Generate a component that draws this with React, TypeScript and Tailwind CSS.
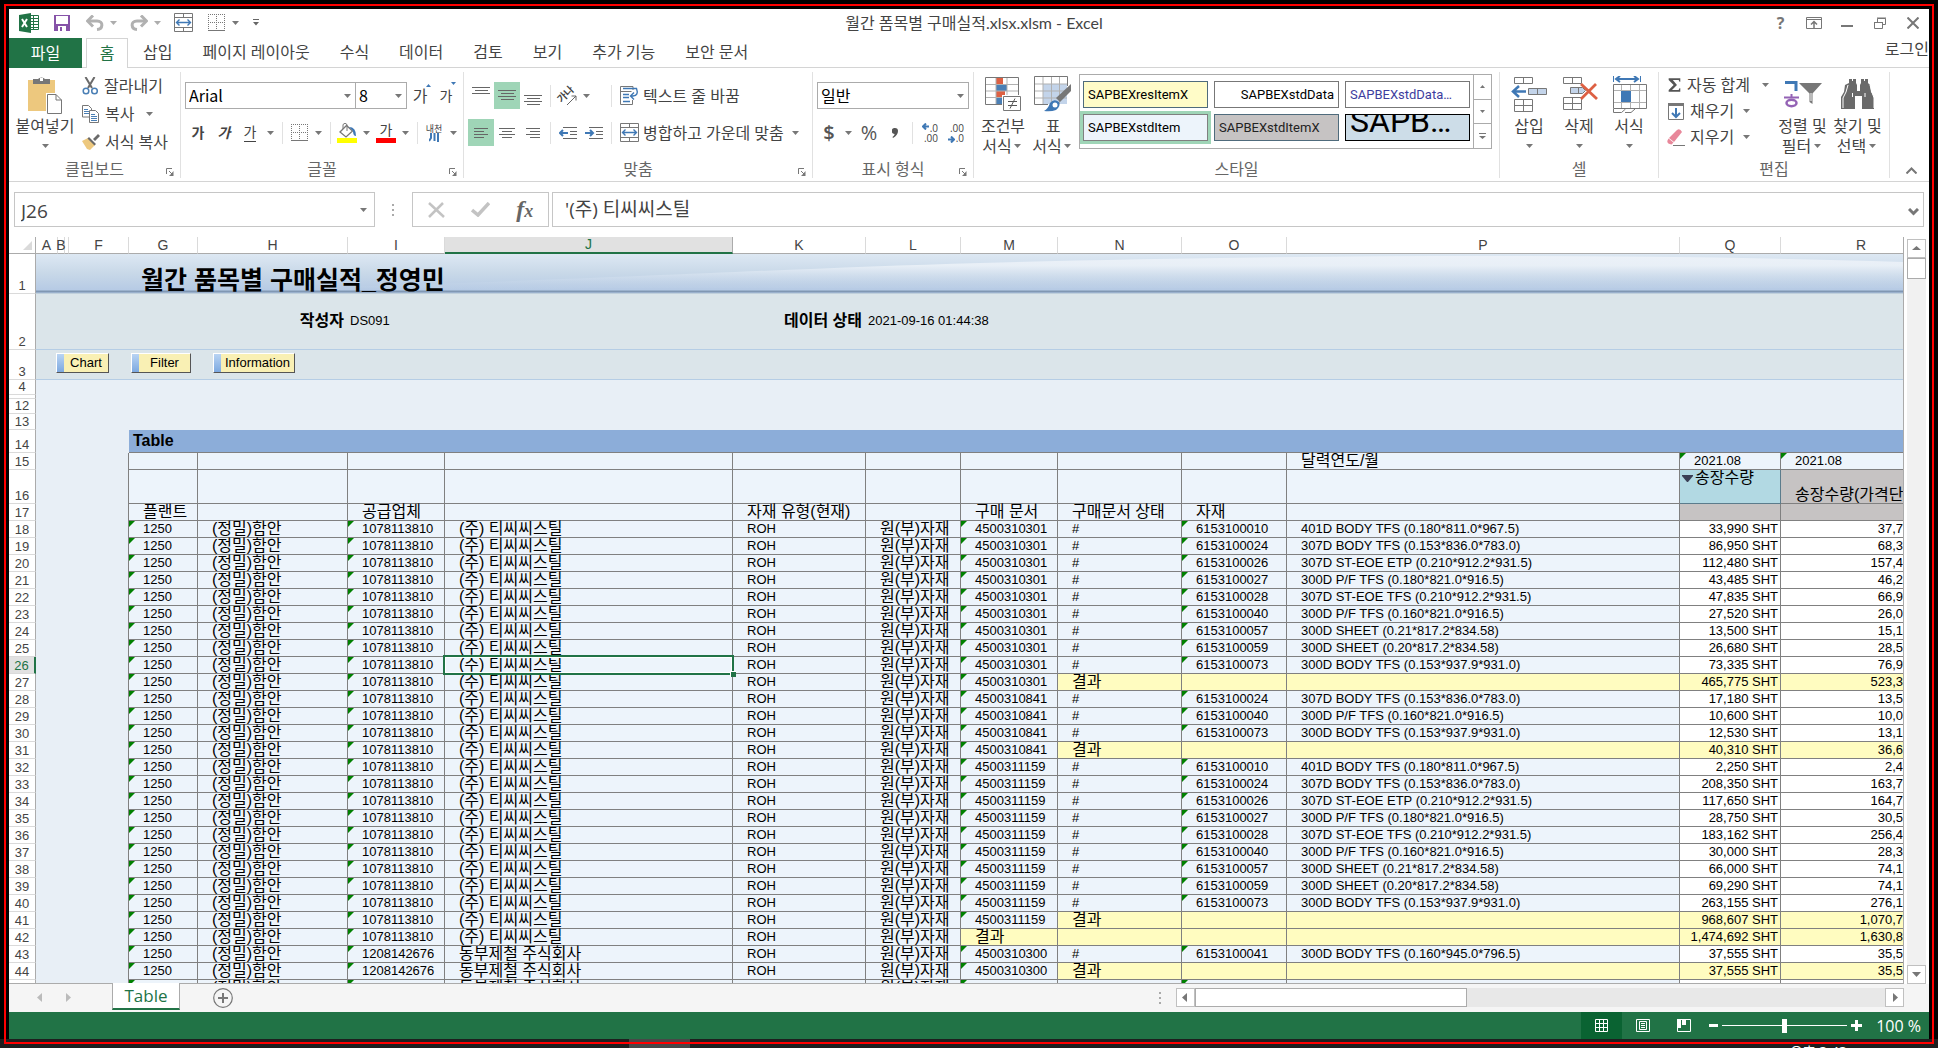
import type { ReactNode } from 'react';

/* ---------- small building blocks ---------- */

function Arrow({ className = 'w-[15px]' }: { className?: string }) {
  return (
    <span className={`flex shrink-0 items-center justify-center ${className}`}>
      <svg width="7" height="4" viewBox="0 0 7 4" aria-hidden="true">
        <path d="M0 0h7L3.5 4z" fill="#777" />
      </svg>
    </span>
  );
}

function Sep() {
  return <span className="mx-1 h-[22px] w-px shrink-0 bg-[#e1e1e1]" />;
}

function Tool({ label, on, wide, children }: { label: string; on?: boolean; wide?: boolean; children: ReactNode }) {
  return (
    <button
      type="button"
      aria-label={label}
      className={`flex h-[27px] shrink-0 items-center justify-center ${wide ? 'w-[26px]' : 'w-6'} ${on ? 'bg-[#9fd5b7]' : ''}`}
    >
      {children}
    </button>
  );
}

function Group({ label, width, launcher, children }: { label: string; width: string; launcher?: boolean; children: ReactNode }) {
  return (
    <section aria-label={label} className={`relative flex shrink-0 flex-col border-r border-[#e1e1e1] ${width}`}>
      <div className="flex-1 pl-1">{children}</div>
      <div className="h-[18px] text-center leading-[18px] text-[#666]">{label}</div>
      {launcher && (
        <button type="button" aria-label={`${label} 설정`} className="absolute right-1.5 bottom-0.5">
          <svg width="8" height="8" viewBox="0 0 8 8" fill="none" stroke="#777">
            <path d="M.5 6V.5H6M3 3l3 3" />
            <path d="M7.5 3v5H3l2-2z" fill="#777" stroke="none" />
          </svg>
        </button>
      )}
    </section>
  );
}

function Combo({ label, value, className }: { label: string; value: string; className: string }) {
  return (
    <span className={`relative h-[27px] shrink-0 border border-[#ababab] bg-white [font-family:'Noto_Sans_CJK_KR',sans-serif] ${className}`}>
      <select aria-label={label} className="size-full appearance-none pb-0.5 pl-[3px] leading-6 text-black outline-none">
        <option>{value}</option>
      </select>
      <Arrow className="pointer-events-none absolute top-0 right-0 h-full w-[15px]" />
    </span>
  );
}

function BigButton({ lines, icon, width = 'w-[50px]', arrow = 'below' }: { lines: string[]; icon: ReactNode; width?: string; arrow?: 'below' | 'inline' }) {
  return (
    <button type="button" className={`flex shrink-0 flex-col items-center pt-1 leading-5 whitespace-nowrap ${width}`}>
      <span className="flex h-10 items-start justify-center">{icon}</span>
      <span>{lines[0]}</span>
      {arrow === 'inline' ? (
        <span className="flex items-center">
          {lines[1]}
          <Arrow className="w-3" />
        </span>
      ) : (
        <Arrow className="h-5" />
      )}
    </button>
  );
}

/* ---------- icons ---------- */

const Lines = ({ rows, size = 18 }: { rows: [number, number, number][]; size?: number }) => (
  <svg width={size} height="20" viewBox={`0 0 ${size} 20`} stroke="#666" aria-hidden="true">
    {rows.map(([x1, x2, y]) => (
      <path key={y} d={`M${x1} ${y + 0.5}H${x2}`} />
    ))}
  </svg>
);

const ExcelLogo = () => (
  <svg width="20" height="20" viewBox="0 0 20 20" aria-label="Excel">
    <path d="M11 2.5h8.5v14H11z" fill="#fff" stroke="#217346" />
    <path d="M11 5.5h8M11 8.5h8M11 11.5h8M11 14.5h8M14.5 3v14" stroke="#217346" />
    <path d="M0 2l12-2v20L0 18z" fill="#217346" />
    <path d="M3 6l5 8M8 6l-5 8" stroke="#fff" strokeWidth="2" />
  </svg>
);
const SaveIcon = () => (
  <svg width="16" height="16" viewBox="0 0 16 16" aria-hidden="true">
    <path d="M0 0h16v16H0z" fill="#8653a8" />
    <path d="M2 1h12v8H2zM4 11h8v5H4z" fill="#fff" />
    <path d="M6 12h2v4H6z" fill="#8653a8" />
  </svg>
);
const UndoIcon = ({ flip }: { flip?: boolean }) => (
  <svg width="18" height="16" viewBox="0 0 18 16" className={flip ? '-scale-x-100' : ''} fill="none" stroke="#b1b1b1" strokeWidth="3" aria-hidden="true">
    <path d="M2 6h9c7 0 6 8 0 8.500" />
    <path d="M7 0.500L1.500 6l5.500 5.500" />
  </svg>
);
const MergeIcon = () => (
  <svg width="19" height="19" viewBox="0 0 19 19" fill="none" stroke="#777" aria-hidden="true">
    <path d="M.5.5h18v18H.5zM0 4.500h19M0 14.500h19M9.500 0v4M9.500 15v4" />
    <path d="M2.500 9.500h14M5.500 6.500l-3 3 3 3M13.500 6.500l3 3-3 3" stroke="#3f78b5" strokeWidth="1.400" />
  </svg>
);
const BordersIcon = () => (
  <svg width="17" height="17" viewBox="0 0 17 17" fill="none" stroke="#777" aria-hidden="true">
    <path d="M.5 0v16M8.500 0v16M16.500 0v16M0 .5h17M0 8.500h17" strokeDasharray="1 1" />
    <path d="M0 16.500h17" />
  </svg>
);
const PasteIcon = () => (
  <svg width="34" height="38" viewBox="0 0 34 38" aria-hidden="true">
    <path d="M0 4h27v31H0z" fill="#edc87e" />
    <path d="M5 3h5a4 3 0 0 1 7 0h5v5H5z" fill="#777" />
    <path d="M12 2h3v3h-3z" fill="#fff" />
    <path d="M18 17h10l6 6v15H18z" fill="#fff" />
    <path d="M19.500 18.500h8.500l5.500 5.500v13.500h-14zM28 18.500V24h5.500" fill="#fff" stroke="#777" />
  </svg>
);
const CutIcon = () => (
  <svg width="17" height="18" viewBox="0 0 17 18" fill="none" aria-hidden="true">
    <path d="M3.500 0L10 11M12.500 0L6 11" stroke="#6a6a6a" strokeWidth="2" />
    <circle cx="4" cy="14" r="2.800" stroke="#4a7fb5" strokeWidth="1.500" />
    <circle cx="12.500" cy="14" r="2.800" stroke="#4a7fb5" strokeWidth="1.500" />
  </svg>
);
const CopyIcon = () => (
  <svg width="18" height="18" viewBox="0 0 18 18" aria-hidden="true">
    <path d="M.5.5h6l3 3v8.500h-9z" fill="#fff" stroke="#777" />
    <path d="M2 4.500h4M2 6.500h5M2 8.500h5" stroke="#4a7fb5" />
    <path d="M7.500 5.500h6l3 3v9h-9z" fill="#fff" stroke="#777" />
    <path d="M9 9.500h4M9 11.500h6M9 13.500h6M9 15.500h6" stroke="#4a7fb5" />
  </svg>
);
const PainterIcon = () => (
  <svg width="18" height="16" viewBox="0 0 18 16" aria-hidden="true">
    <path d="M0 7l6-3 7 7-5 5-3-1z" fill="#edc87e" />
    <path d="M7 3l7 7-1.500 1.500-7-7zM11 5l5-5 2 2-5 5z" fill="#6a6a6a" />
  </svg>
);
const FillIcon = () => (
  <svg width="20" height="20" viewBox="0 0 20 20" fill="none" aria-hidden="true">
    <path d="M9.500 2.500L3 9l6 5 6.500-6z" stroke="#777" strokeWidth="1.300" fill="#fff" />
    <path d="M6 6V1.500q2-2.500 4 0V8" stroke="#777" />
    <path d="M12 4q7 0 7 9-3 0-3-5z" fill="#3f78b5" />
    <path d="M0 15h20v5H0z" fill="#ff0" />
  </svg>
);
const OrientIcon = () => (
  <span className="relative flex size-5 items-center justify-center">
    <span className="-mt-1 -ml-1 -rotate-45 text-[10px] leading-3 font-semibold">가나</span>
    <svg width="12" height="12" viewBox="0 0 12 12" fill="none" stroke="#666" className="absolute right-0 bottom-0" aria-hidden="true">
      <path d="M2 11l9-9M11 6.500V2H6.500" />
    </svg>
  </span>
);
const IndentIcon = ({ right }: { right?: boolean }) => (
  <svg width="18" height="12" viewBox="0 0 18 12" fill="none" aria-hidden="true">
    <path d="M4 .5h14M11 4.500h7M11 7.500h7M4 11.500h14" stroke="#666" />
    <path d={right ? 'M0 6h8M5 3l3 3-3 3' : 'M9 6H1M4 3L1 6l3 3'} stroke="#3f78b5" strokeWidth="2" />
  </svg>
);
const WrapIcon = () => (
  <svg width="19" height="19" viewBox="0 0 19 19" fill="none" stroke="#777" aria-hidden="true">
    <path d="M13 4V.5H.5v18h12V14M.5 5.500h11" />
    <path d="M3 2.500h13.500q2.500 7-3.500 7.500h-2M14 6.500L10.500 10l3.500 3.500M3 8.500h6M3 11.500h6M3 15.500h7" stroke="#3f78b5" strokeWidth="1.400" />
  </svg>
);
const DecimalIcon = ({ less }: { less?: boolean }) => (
  <span className="relative flex w-4 flex-col text-right text-[10px] leading-[10px] text-[#444]">
    <span>{less ? '.00' : '.0'}</span>
    <span>{less ? '.0' : '.00'}</span>
    <svg width="7" height="7" viewBox="0 0 7 7" className={`absolute left-0 ${less ? 'bottom-0' : 'top-0'}`} fill="none" stroke="#3f78b5" strokeWidth="2" aria-hidden="true">
      <path d={less ? 'M0 3.500h6M3 .5l3 3-3 3' : 'M7 3.500H1M4 .5l-3 3 3 3'} />
    </svg>
  </span>
);
const CondIcon = () => (
  <svg width="38" height="36" viewBox="0 0 38 36" aria-hidden="true">
    <path d="M1 1h33v27H1z" fill="#fff" />
    <path d="M12 1h7v7h-7zM12 15h9v7h-9z" fill="#dd6043" />
    <path d="M12 8h11v7H12zM12 22h6v6h-6z" fill="#4a7fb5" />
    <path d="M1 8.500h33M1 15h33M1 21.500h33M12 1v27M23 1v27" stroke="#b1b1b1" fill="none" />
    <path d="M1.500 1.500h33v27h-33z" stroke="#777" fill="none" />
    <path d="M18 19h20v17H18z" fill="#fff" />
    <path d="M19.500 20.500h17v14h-17z" stroke="#777" fill="#fff" />
    <path d="M24 25.500h9M24 29.500h9M31 22.500l-5 10" stroke="#555" fill="none" />
  </svg>
);
const TableFormatIcon = () => (
  <svg width="38" height="36" viewBox="0 0 38 36" aria-hidden="true">
    <path d="M9 8h24v20H9z" fill="#c3d4ea" />
    <path d="M1 8h32M1 15h32M1 22h32M9 1v27M17.500 1v27M25.500 1v27" stroke="#b1b1b1" fill="none" />
    <path d="M33.500 10V.5H.5v28H14" stroke="#777" fill="none" />
    <path d="M37 8v7L26 26l-4-4z" fill="#777" />
    <path d="M10 35q4-2 6-8 4-5 9-1 2 4-3 8-5 2-12 1z" fill="#3f78b5" />
    <circle cx="21" cy="29" r="2.500" fill="#fff" />
  </svg>
);
const InsertCellsIcon = () => (
  <svg width="37" height="36" viewBox="0 0 37 36" fill="none" stroke="#777" aria-hidden="true">
    <path d="M3.500 1.500h18v6h-18zM12.500 1.500v6M3.500 23.500h18v12h-18zM3.500 29.500h18M12.500 23.500v12" />
    <path d="M17.500 12.500h18v6h-18zM26.500 12.500v6" fill="#c3d4ea" />
    <path d="M15 15.500H2M8 10l-6 5.500L8 21" stroke="#3f78b5" strokeWidth="2.500" />
  </svg>
);
const DeleteCellsIcon = () => (
  <svg width="37" height="36" viewBox="0 0 37 36" fill="none" stroke="#777" aria-hidden="true">
    <path d="M2.500 1.500h18v6h-18zM11.500 1.500v6M2.500 21.500h18v12h-18zM2.500 27.500h18M11.500 21.500v12" />
    <path d="M9.500 11.500h12l3 3-3 3h-12zM17.500 11.500v6" fill="#c3d4ea" />
    <path d="M20 8l16 15M35 8L20 23" stroke="#dd6043" strokeWidth="2.800" />
  </svg>
);
const FormatCellsIcon = () => (
  <svg width="35" height="38" viewBox="0 0 35 38" fill="none" stroke="#777" aria-hidden="true">
    <path d="M1.500 0v6M28.500 0v6" stroke="#3f78b5" />
    <path d="M5 3h20M8 0L4 3l4 3M22 0l4 3-4 3" stroke="#3f78b5" strokeWidth="2" />
    <path d="M1 14.500h33M1 26.500h33M9.500 9v24M18.500 9v24M27.500 9v24" stroke="#b1b1b1" />
    <path d="M1.500 8.500h33v24h-33zM1.500 33v3.500h8l4-3.500M13 36.500h6l4-3.500" />
    <path d="M9 15h10v11H9z" fill="#3f78b5" stroke="none" />
  </svg>
);
const SumIcon = () => (
  <svg width="18" height="18" viewBox="0 0 18 18" aria-hidden="true">
    <path d="M2 1h14v4h-1l-1-2H7l5 6-6 6h8l1-2h1v4H2v-2l6-6-6-6z" fill="#555" />
  </svg>
);
const FillDownIcon = () => (
  <svg width="18" height="18" viewBox="0 0 18 18" fill="none" aria-hidden="true">
    <path d="M1.500 2.500h15v15h-15z" stroke="#777" />
    <path d="M1 1h16v3H1z" fill="#777" />
    <path d="M9 6v9M5 11l4 4 4-4" stroke="#3f78b5" strokeWidth="2" />
  </svg>
);
const EraseIcon = () => (
  <svg width="18" height="18" viewBox="0 0 18 18" aria-hidden="true">
    <path d="M10 2q3-2 5 2L7 14l-5-4z" fill="#e8879a" />
    <path d="M1.500 10.500l5 4-2 2q-5-1-4-4z" fill="#e8879a" />
    <path d="M6 17.500h12" stroke="#777" />
  </svg>
);
const SortIcon = () => (
  <svg width="38" height="32" viewBox="0 0 38 32" fill="none" aria-hidden="true">
    <path d="M1 6.500h11V15" stroke="#3f78b5" strokeWidth="3" />
    <path d="M0 21.500h15M7.500 18v3" stroke="#9463b5" strokeWidth="2" />
    <ellipse cx="7.500" cy="27" rx="5" ry="3.200" stroke="#9463b5" strokeWidth="2.500" />
    <path d="M15 7h23L28.500 17.500V28l-3-2v-8.500z" fill="#777" />
    <path d="M27 17v8" stroke="#fff" />
  </svg>
);
const BinocularsIcon = () => (
  <svg width="36" height="34" viewBox="0 0 36 34" aria-hidden="true">
    <path d="M9 3h3v2h1V3h3v4l1 2v6h3V9l1-2V3h3v2h1V3h3v4l2 2 1 7 3 5v12H22V20h-7v13H1V21l3-5 1-7 4-2z" fill="#6a6a6a" />
    <path d="M8 9L6 16l-3 6v10M30 9l2 7 2 6v10M12.500 17v4M25 17v4" stroke="#fff" strokeWidth="1" fill="none" />
  </svg>
);

/* ---------- sheet data ---------- */

const MATERIALS: Record<string, string> = {
  '6153100010': '401D BODY TFS (0.180*811.0*967.5)',
  '6153100024': '307D BODY TFS (0.153*836.0*783.0)',
  '6153100026': '307D ST-EOE ETP (0.210*912.2*931.5)',
  '6153100027': '300D P/F TFS (0.180*821.0*916.5)',
  '6153100028': '307D ST-EOE TFS (0.210*912.2*931.5)',
  '6153100040': '300D P/F TFS (0.160*821.0*916.5)',
  '6153100057': '300D SHEET (0.21*817.2*834.58)',
  '6153100059': '300D SHEET (0.20*817.2*834.58)',
  '6153100073': '300D BODY TFS (0.153*937.9*931.0)',
  '6153100041': '300D BODY TFS (0.160*945.0*796.5)',
};

const TCC = { code: '1078113810', name: '(주) 티씨씨스틸' };
const DONGBU = { code: '1208142676', name: '동부제철 주식회사' };

type Row = { vendor: typeof TCC; doc: string | null; material: string | null; qty: string; price: string };
const r = (vendor: typeof TCC, doc: string | null, material: string | null, qty: string, price: string): Row => ({ vendor, doc, material, qty, price });

const ROWS: Row[] = [
  r(TCC, '4500310301', '6153100010', '33,990', '37,7'),
  r(TCC, '4500310301', '6153100024', '86,950', '68,3'),
  r(TCC, '4500310301', '6153100026', '112,480', '157,4'),
  r(TCC, '4500310301', '6153100027', '43,485', '46,2'),
  r(TCC, '4500310301', '6153100028', '47,835', '66,9'),
  r(TCC, '4500310301', '6153100040', '27,520', '26,0'),
  r(TCC, '4500310301', '6153100057', '13,500', '15,1'),
  r(TCC, '4500310301', '6153100059', '26,680', '28,5'),
  r(TCC, '4500310301', '6153100073', '73,335', '76,9'),
  r(TCC, '4500310301', null, '465,775', '523,3'),
  r(TCC, '4500310841', '6153100024', '17,180', '13,5'),
  r(TCC, '4500310841', '6153100040', '10,600', '10,0'),
  r(TCC, '4500310841', '6153100073', '12,530', '13,1'),
  r(TCC, '4500310841', null, '40,310', '36,6'),
  r(TCC, '4500311159', '6153100010', '2,250', '2,4'),
  r(TCC, '4500311159', '6153100024', '208,350', '163,7'),
  r(TCC, '4500311159', '6153100026', '117,650', '164,7'),
  r(TCC, '4500311159', '6153100027', '28,750', '30,5'),
  r(TCC, '4500311159', '6153100028', '183,162', '256,4'),
  r(TCC, '4500311159', '6153100040', '30,000', '28,3'),
  r(TCC, '4500311159', '6153100057', '66,000', '74,1'),
  r(TCC, '4500311159', '6153100059', '69,290', '74,1'),
  r(TCC, '4500311159', '6153100073', '263,155', '276,1'),
  r(TCC, '4500311159', null, '968,607', '1,070,7'),
  r(TCC, null, null, '1,474,692', '1,630,8'),
  r(DONGBU, '4500310300', '6153100041', '37,555', '35,5'),
  r(DONGBU, '4500310300', null, '37,555', '35,5'),
  r(DONGBU, '4500310303', '6153100041', '37,555', '35,5'),
];

/* ---------- sheet cells ---------- */

const BLUE = 'bg-[#edf4fb]';
const YELLOW = 'bg-[#fffcc0]';
const GREY = 'bg-[#c6c3c3]';

function Flag() {
  return <span className="absolute top-0 left-0 size-1.5 bg-[#008000] [clip-path:polygon(0_0,100%_0,0_100%)]" />;
}

function Cell({ text = '', ko, bg = BLUE, flag, right, span, valign = 'align-middle', first, edge, selected }: {
  text?: string; ko?: boolean; bg?: string; flag?: boolean; right?: boolean; span?: number; valign?: string; first?: boolean; edge?: boolean; selected?: boolean;
}) {
  return (
    <td
      colSpan={span}
      className={`relative border-b border-[#808080] p-0 ${edge ? '' : 'border-r'} ${first ? 'shadow-[-1px_0_0_#808080]' : ''} ${valign} ${bg}`}
    >
      {flag && <Flag />}
      <div className={`relative z-[1] h-4 whitespace-nowrap ${ko ? 'text-base leading-4' : 'text-[13px] leading-4'} ${right ? (edge ? 'text-right' : 'pr-0.5 text-right') : 'pl-3.5'}`}>{text}</div>
      {selected && (
        <span className="pointer-events-none absolute -inset-0.5 z-10 border-2 border-[#217346] shadow-[inset_0_0_0_1px_#fff]">
          <span className="absolute -right-1 -bottom-1 size-[6px] border-t border-l border-white bg-[#217346]" />
        </span>
      )}
    </td>
  );
}

function RowHead({ n, on }: { n: string; on?: boolean }) {
  return (
    <th
      scope="row"
      className={`border-r border-b border-b-[#dadada] p-0 align-bottom text-[13px] font-normal ${on ? 'border-r-2 border-r-[#217346] bg-[#e1e1e1] text-[#217346]' : 'border-r-[#ababab] bg-white text-[#444]'}`}
    >
      <div className="pb-px leading-[13px]">{n}</div>
    </th>
  );
}

const COLS: [string, string][] = [
  ['A', 'w-[22px]'], ['B', 'w-[7px]'], ['', 'w-[4px]'], ['F', 'w-[60px]'], ['G', 'w-[69px]'], ['H', 'w-[150px]'], ['I', 'w-[97px]'],
  ['J', 'w-[288px]'], ['K', 'w-[133px]'], ['L', 'w-[95px]'], ['M', 'w-[97px]'], ['N', 'w-[124px]'], ['O', 'w-[105px]'],
  ['P', 'w-[393px]'], ['Q', 'w-[101px]'], ['R', ''],
];

function Margin() {
  return <td colSpan={4} className="bg-[#e8eff6] p-0" />;
}

function Blank({ n, height }: { n: string; height: string }) {
  return (
    <tr className={height}>
      {n ? <RowHead n={n} /> : <th className="border-r border-b border-r-[#ababab] border-b-[#dadada] bg-white p-0" />}
      <td colSpan={16} className="bg-[#e8eff6] p-0" />
    </tr>
  );
}

function ReportButton({ label, width }: { label: string; width: string }) {
  return (
    <button type="button" className={`flex h-5 border border-t-white border-r-[#555] border-b-[#555] border-l-white bg-[#f9f0b4] text-[13px] text-black ${width}`}>
      <span className="h-full w-[7px] shrink-0 bg-linear-to-b from-[#b9d4f3] to-[#7da9e0]" />
      <span className="flex-1 text-center leading-[18px]">{label}</span>
    </button>
  );
}

const META = 'border-b border-[#b5cde5] bg-[#dbe5ea] p-0 pb-0.5 whitespace-nowrap';

function Sheet() {
  return (
    <table className="w-full table-fixed border-separate border-spacing-0 text-black [font-family:'Liberation_Sans','Noto_Sans_CJK_KR',sans-serif]">
      <colgroup>
        <col className="w-[27px]" />
        {COLS.map(([name, width], i) => <col key={name + i} className={width} />)}
      </colgroup>
      <thead>
        <tr className="h-[17px]">
          <th className="border-r border-b border-[#ababab] p-0">
            <svg width="9" height="9" viewBox="0 0 9 9" className="ml-auto mr-[3px]" aria-hidden="true"><path d="M9 0v9H0z" fill="#dadada" /></svg>
          </th>
          {COLS.map(([name], i) => (
            <th
              key={name + i}
              scope="col"
              className={`p-0 text-[14px] leading-[15px] font-normal ${
                name === 'J' ? 'border-r border-b-2 border-r-[#ababab] border-b-[#217346] bg-[#e1e1e1] text-[#217346]'
                : name === 'R' ? 'border-b border-[#ababab] pl-[38px] text-[#444]'
                : 'border-r border-b border-r-[#dadada] border-b-[#ababab] text-[#444]'}`}
            >
              <div className="-mx-1">{name}</div>
            </th>
          ))}
        </tr>
      </thead>
      <tbody>
        <tr className="h-10">
          <RowHead n="1" />
          <td colSpan={16} className="relative border-b border-[#c0d0dc] bg-linear-to-b from-[#dde8f3] via-[#c8d8e8] to-[#b3c8e4] p-0 align-bottom">
            <svg viewBox="0 0 1867 39" preserveAspectRatio="none" className="absolute inset-0 size-full" aria-hidden="true">
              <defs>
                <linearGradient id="sheen" x1="0" y1="0" x2="0" y2="39" gradientUnits="userSpaceOnUse">
                  <stop offset="0" stopColor="#f0f4fa" stopOpacity="0.800" />
                  <stop offset="0.300" stopColor="#eef3f9" stopOpacity="0.800" />
                  <stop offset="0.800" stopColor="#c5d6ea" stopOpacity="0.200" />
                  <stop offset="1" stopColor="#c5d6ea" stopOpacity="0" />
                </linearGradient>
              </defs>
              <path d="M300 33C600 24 760 14 944 9C1200 2 1560 -2 1867 8V34H560L480 36z" fill="url(#sheen)" />
              <path d="M0 37.500H1867" stroke="#8097b3" strokeWidth="2" />
            </svg>
            <h1 className="relative pl-[105px] text-[25px] leading-[26px] font-bold">월간 품목별 구매실적_정영민</h1>
          </td>
        </tr>
        <tr className="h-14">
          <RowHead n="2" />
          <td colSpan={5} className={META} />
          <td className={`${META} pr-1 text-right text-base font-bold`}>작성자</td>
          <td className={`${META} pl-0.5 text-[13px]`}>DS091</td>
          <td className={META} />
          <td className={`${META} pr-1 text-right text-base font-bold`}>데이터 상태</td>
          <td colSpan={7} className={`${META} pl-0.5 text-[13px]`}>2021-09-16 01:44:38</td>
        </tr>
        <tr className="h-[30px]">
          <RowHead n="3" />
          <td colSpan={16} className="border-b border-[#b5cde5] bg-[#dbe5ea] p-0 pb-1">
            <div className="flex items-center gap-[22px] pl-5">
              <ReportButton label="Chart" width="w-[53px]" />
              <ReportButton label="Filter" width="w-[60px]" />
              <ReportButton label="Information" width="w-[82px]" />
            </div>
          </td>
        </tr>
        <Blank n="4" height="h-[15px]" />
        <Blank n="" height="h-1" />
        <Blank n="12" height="h-[15px]" />
        <Blank n="13" height="h-4" />
        <tr className="h-[23px]">
          <RowHead n="14" />
          <Margin />
          <td colSpan={12} className="border-b border-[#808080] bg-[#8cadd9] p-0 pl-1 text-base leading-5 font-bold">Table</td>
        </tr>
        <tr className="h-[17px]">
          <RowHead n="15" />
          <Margin />
          <Cell first /><Cell /><Cell /><Cell /><Cell /><Cell /><Cell /><Cell /><Cell />
          <Cell text="달력연도/월" ko />
          <Cell text="2021.08" flag />
          <Cell text="2021.08" flag edge />
        </tr>
        <tr className="h-[34px]">
          <RowHead n="16" />
          <Margin />
          <Cell first /><Cell /><Cell /><Cell /><Cell /><Cell /><Cell /><Cell /><Cell /><Cell />
          <td className="border-r border-b border-[#5b7c8c] bg-[#b2d9e3] p-0 align-top">
            <div className="flex h-4 items-center gap-0.5 pl-0.5 text-base leading-4">
              <svg width="11" height="7" viewBox="0 0 11 7" aria-hidden="true"><path d="M0 0h11v1L6 7H5L0 1z" fill="#3b3f55" /></svg>
              송장수량
            </div>
          </td>
          <Cell text="송장수량(가격단" ko bg={GREY} valign="align-bottom" edge />
        </tr>
        <tr className="h-[17px]">
          <RowHead n="17" />
          <Margin />
          <Cell text="플랜트" ko first />
          <Cell />
          <Cell text="공급업체" ko />
          <Cell />
          <Cell text="자재 유형(현재)" ko />
          <Cell />
          <Cell text="구매 문서" ko />
          <Cell text="구매문서 상태" ko />
          <Cell text="자재" ko />
          <Cell />
          <Cell bg={GREY} />
          <Cell bg={GREY} edge />
        </tr>
        {ROWS.map((row, i) => {
          const n = 18 + i;
          const total = row.material === null;
          const grand = row.doc === null;
          return (
            <tr key={n} className="h-[17px]">
              <RowHead n={String(n)} on={n === 26} />
              <Margin />
              <Cell text="1250" flag first />
              <Cell text="(정밀)함안" ko />
              <Cell text={row.vendor.code} flag />
              <Cell text={row.vendor.name} ko selected={n === 26} />
              <Cell text="ROH" />
              <Cell text="원(부)자재" ko />
              {grand ? <Cell text="결과" ko bg={YELLOW} /> : <Cell text={row.doc ?? ''} flag />}
              <Cell text={grand ? '' : total ? '결과' : '#'} ko={total} bg={total ? YELLOW : BLUE} />
              <Cell text={row.material ?? ''} flag={!total} bg={total ? YELLOW : BLUE} />
              <Cell text={row.material ? MATERIALS[row.material] : ''} bg={total ? YELLOW : BLUE} />
              <Cell text={`${row.qty} SHT`} right bg={total ? YELLOW : 'bg-white'} />
              <Cell text={row.price} right edge bg={total ? YELLOW : 'bg-white'} />
            </tr>
          );
        })}
      </tbody>
    </table>
  );
}

/* ---------- window parts ---------- */

function TitleBar() {
  return (
    <header className="flex h-[29px] shrink-0 items-center pb-0.5">
      <div className="flex flex-1 items-center pl-2.5">
        <ExcelLogo />
        <button type="button" aria-label="저장" className="ml-[15px]"><SaveIcon /></button>
        <button type="button" aria-label="실행 취소" className="ml-4"><UndoIcon /></button>
        <Arrow className="w-[18px] opacity-60" />
        <button type="button" aria-label="다시 실행" className="ml-2"><UndoIcon flip /></button>
        <Arrow className="w-[18px] opacity-60" />
        <button type="button" aria-label="병합" className="ml-2"><MergeIcon /></button>
        <button type="button" aria-label="테두리" className="ml-[15px]"><BordersIcon /></button>
        <Arrow className="w-5" />
        <button type="button" aria-label="빠른 실행 도구 모음 사용자 지정" className="ml-2">
          <svg width="6" height="7" viewBox="0 0 6 7"><path d="M0 0h6v1H0zM0 3h6L3 6.500z" fill="#666" /></svg>
        </button>
      </div>
      <div className="leading-6 [font-family:Lato,'Noto_Sans_CJK_KR',sans-serif]">월간 폼목별 구매실적.xlsx.xlsm - Excel</div>
      <div className="flex flex-1 items-center justify-end">
        <button type="button" aria-label="도움말" className="w-[33px] font-bold text-[#777]">?</button>
        <button type="button" aria-label="리본 표시 옵션" className="flex w-[33px] justify-center">
          <svg width="16" height="12" viewBox="0 0 16 12" fill="none" stroke="#777"><path d="M.5.5h15v11H.5zM0 2.500h16" /><path d="M8 11V5M5 7.500L8 4.500l3 3" strokeWidth="1.500" /></svg>
        </button>
        <button type="button" aria-label="최소화" className="flex w-[33px] justify-center">
          <svg width="12" height="12" viewBox="0 0 12 12"><path d="M0 8h12v2H0z" fill="#777" /></svg>
        </button>
        <button type="button" aria-label="이전 크기로 복원" className="flex w-[33px] justify-center">
          <svg width="12" height="12" viewBox="0 0 12 12" fill="none" stroke="#777"><path d="M.5 5.500h8v6h-8zM0 5.500h9M3.500 5V1.500h8v6H9M3 1h9" /></svg>
        </button>
        <button type="button" aria-label="닫기" className="flex w-[33px] justify-center">
          <svg width="12" height="12" viewBox="0 0 12 12" stroke="#777" strokeWidth="2"><path d="M.5.5l11 11M11.500.5l-11 11" /></svg>
        </button>
      </div>
    </header>
  );
}

const TABS = ['삽입', '페이지 레이아웃', '수식', '데이터', '검토', '보기', '추가 기능', '보안 문서'];

function TabRow() {
  return (
    <nav className="flex h-[30px] shrink-0 border-b border-[#d4d4d4] whitespace-nowrap">
      <button type="button" className="-mb-px w-[73px] bg-[#217346] text-white">파일</button>
      <button type="button" className="-mb-px ml-1 w-[42px] border-x border-t border-[#d4d4d4] bg-white pb-0.5 text-[#217346]">홈</button>
      {TABS.map((t) => <button type="button" key={t} className="px-[15px] pb-0.5">{t}</button>)}
      <a href="#login" className="ml-auto leading-[22px]">로그인</a>
    </nav>
  );
}

const STYLES: [string, string][] = [
  ['SAPBEXresItemX', 'border-[#4f6b7c] bg-[#fffcc8] text-left text-black'],
  ['SAPBEXstdData', 'border-[#777] bg-white text-right text-black'],
  ['SAPBEXstdData…', 'border-[#777] bg-white text-left text-[#3d3d9e]'],
  ['SAPBEXstdItem', 'border-[#808080] bg-[#edf4fb] text-left text-black ring-3 ring-[#9fd5b7]'],
  ['SAPBEXstdItemX', 'border-[#4f6b7c] bg-[#c6c3c3] text-left text-[#222]'],
];

function Ribbon() {
  return (
    <div className="flex h-[114px] shrink-0 border-b border-[#d4d4d4] pt-1 pb-[3px] whitespace-nowrap">
      <Group label="클립보드" width="w-[172px]" launcher>
        <div className="flex">
          <BigButton lines={['붙여넣기']} icon={<PasteIcon />} width="w-[64px]" />
          <div className="flex flex-col pl-[5px]">
            <button type="button" className="flex h-7 items-center gap-[5px]"><CutIcon />잘라내기</button>
            <button type="button" className="flex h-7 items-center gap-[5px]"><CopyIcon />복사<Arrow className="w-5" /></button>
            <button type="button" className="flex h-7 items-center gap-[5px]"><PainterIcon />서식 복사</button>
          </div>
        </div>
      </Group>

      <Group label="글꼴" width="w-[283px]" launcher>
        <div className="flex flex-col gap-2.5 pt-2.5">
          <div className="flex">
            <Combo label="글꼴 이름" value="Arial" className="w-[171px]" />
            <Combo label="글꼴 크기" value="8" className="-ml-px w-[52px]" />
            <Tool label="글꼴 크기 크게" wide><span className="relative">가<svg width="5" height="3" viewBox="0 0 5 3" className="absolute top-0 -right-1"><path d="M0 3h5L2.500 0z" fill="#3f78b5" /></svg></span></Tool>
            <Tool label="글꼴 크기 작게" wide><span className="relative text-sm">가<svg width="5" height="3" viewBox="0 0 5 3" className="absolute -top-1 -right-1"><path d="M0 0h5L2.500 3z" fill="#3f78b5" /></svg></span></Tool>
          </div>
          <div className="flex items-center">
            <Tool label="굵게" wide><b className="text-sm">가</b></Tool>
            <Tool label="기울임꼴" wide><i className="text-sm font-semibold">가</i></Tool>
            <Tool label="밑줄" wide><span className="border-b border-[#444] text-sm leading-[18px]">가</span></Tool>
            <Arrow />
            <Sep />
            <Tool label="테두리"><BordersIcon /></Tool>
            <Arrow />
            <Sep />
            <Tool label="채우기 색"><FillIcon /></Tool>
            <Arrow />
            <Tool label="글꼴 색"><span className="w-5 border-b-5 border-[#f00] text-sm leading-4">가</span></Tool>
            <Arrow />
            <Sep />
            <Tool label="윗주 필드">
              <span className="flex flex-col items-center text-[9px] leading-[9px]">
                내천
                <svg width="10" height="9" viewBox="0 0 10 9" fill="none" stroke="#3f78b5" strokeWidth="2" aria-hidden="true"><path d="M2 0v5L0 8M5.500 0v8M9 0v9" /></svg>
              </span>
            </Tool>
            <Arrow />
          </div>
        </div>
      </Group>

      <Group label="맞춤" width="w-[349px]" launcher>
        <div className="flex flex-col gap-2.5 pt-2.5">
          <div className="flex items-center">
            <Tool label="위쪽 맞춤" wide><Lines rows={[[0, 18, 1], [3, 16, 4], [0, 18, 7]]} /></Tool>
            <Tool label="가운데 맞춤" wide on><Lines rows={[[0, 18, 4], [3, 16, 7], [0, 18, 10], [3, 16, 13]]} /></Tool>
            <Tool label="아래쪽 맞춤" wide><Lines rows={[[0, 18, 9], [3, 16, 12], [0, 18, 15], [3, 16, 18]]} /></Tool>
            <Sep />
            <div className="flex w-[52px]"><Tool label="방향"><OrientIcon /></Tool><Arrow /></div>
            <Sep />
            <button type="button" className="flex items-center gap-1 pl-1"><WrapIcon />텍스트 줄 바꿈</button>
          </div>
          <div className="flex items-center">
            <Tool label="왼쪽 맞춤" wide on><Lines size={14} rows={[[0, 14, 5], [0, 10, 8], [0, 14, 11], [0, 10, 14]]} /></Tool>
            <Tool label="가로 가운데" wide><Lines size={16} rows={[[0, 16, 5], [3, 13, 8], [0, 16, 11], [3, 13, 14]]} /></Tool>
            <Tool label="오른쪽 맞춤" wide><Lines size={14} rows={[[0, 14, 5], [4, 14, 8], [0, 14, 11], [4, 14, 14]]} /></Tool>
            <Sep />
            <div className="flex w-[52px]"><Tool label="내어쓰기" wide><IndentIcon /></Tool><Tool label="들여쓰기" wide><IndentIcon right /></Tool></div>
            <Sep />
            <button type="button" className="flex items-center gap-1 pl-1"><MergeIcon />병합하고 가운데 맞춤<Arrow /></button>
          </div>
        </div>
      </Group>

      <Group label="표시 형식" width="w-[161px]" launcher>
        <div className="flex flex-col gap-2.5 pt-2.5">
          <div className="flex"><Combo label="표시 형식" value="일반" className="w-[152px]" /></div>
          <div className="flex items-center">
            <Tool label="회계 표시 형식"><span className="text-xl font-semibold text-[#555]">$</span></Tool>
            <Arrow />
            <Tool label="백분율" wide><span className="text-xl text-[#555]">%</span></Tool>
            <Tool label="쉼표 스타일" wide>
              <svg width="6" height="10" viewBox="0 0 6 10"><path d="M3 0a3 3 0 0 1 3 3Q6 7 1 10L.5 9Q3 7 2.500 6A3 3 0 0 1 3 0z" fill="#555" /></svg>
            </Tool>
            <Sep />
            <Tool label="자릿수 늘림" wide><DecimalIcon /></Tool>
            <Tool label="자릿수 줄임" wide><DecimalIcon less /></Tool>
          </div>
        </div>
      </Group>

      <Group label="스타일" width="w-[526px]">
        <div className="flex">
          <BigButton lines={['조건부', '서식']} icon={<CondIcon />} arrow="inline" />
          <BigButton lines={['표', '서식']} icon={<TableFormatIcon />} arrow="inline" />
          <div className="mt-0.5 ml-px flex h-[75px] border border-[#ababab]">
            <div className="grid grid-cols-3 content-start gap-1.5 px-[3px] pt-1.5 text-[13px] [font-family:Roboto,sans-serif]">
              {STYLES.map(([name, look]) => (
                <button type="button" key={name} className={`h-[27px] w-[125px] overflow-hidden border px-1 leading-[25px] ${look}`}>{name}</button>
              ))}
              <button type="button" className="flex h-[27px] w-[125px] items-center overflow-hidden border border-black bg-[#cddde8] px-1 text-[32px] leading-8 text-black">
                <span className="-mt-3.5">SAPB…</span>
              </button>
            </div>
            <div className="flex w-[18px] flex-col border-l border-[#ababab]">
              <button type="button" aria-label="이전 스타일" className="flex flex-1 items-center justify-center border-b border-[#ababab]"><svg width="5" height="3" viewBox="0 0 5 3"><path d="M0 3h5L2.500 0z" fill="#777" /></svg></button>
              <button type="button" aria-label="다음 스타일" className="flex flex-1 items-center justify-center border-b border-[#ababab]"><svg width="5" height="3" viewBox="0 0 5 3"><path d="M0 0h5L2.500 3z" fill="#777" /></svg></button>
              <button type="button" aria-label="자세히" className="flex flex-1 items-center justify-center"><svg width="7" height="7" viewBox="0 0 7 7"><path d="M0 0h7v1H0zM0 3h7L3.500 6z" fill="#777" /></svg></button>
            </div>
          </div>
        </div>
      </Group>

      <Group label="셀" width="w-[159px]">
        <div className="flex">
          <BigButton lines={['삽입']} icon={<InsertCellsIcon />} />
          <BigButton lines={['삭제']} icon={<DeleteCellsIcon />} />
          <BigButton lines={['서식']} icon={<FormatCellsIcon />} />
        </div>
      </Group>

      <Group label="편집" width="w-[231px]">
        <div className="flex">
          <div className="flex w-[112px] flex-col pl-1">
            <button type="button" className="flex h-[26px] items-center gap-[5px]"><SumIcon />자동 합계<Arrow className="w-5" /></button>
            <button type="button" className="flex h-[26px] items-center gap-[5px]"><FillDownIcon />채우기<Arrow /></button>
            <button type="button" className="flex h-[26px] items-center gap-[5px]"><EraseIcon />지우기<Arrow /></button>
          </div>
          <BigButton lines={['정렬 및', '필터']} icon={<SortIcon />} width="w-[55px]" arrow="inline" />
          <BigButton lines={['찾기 및', '선택']} icon={<BinocularsIcon />} width="w-[55px]" arrow="inline" />
        </div>
      </Group>

      <button type="button" aria-label="리본 축소" className="mt-auto mr-3 ml-auto pb-1">
        <svg width="11" height="7" viewBox="0 0 11 7" fill="none" stroke="#777" strokeWidth="2"><path d="M.5 6.500l5-5 5 5" /></svg>
      </button>
    </div>
  );
}

function Dots() {
  return (
    <svg width="3" height="12" viewBox="0 0 3 12" aria-hidden="true">
      <path d="M0 0h2v2H0zM0 5h2v2H0zM0 10h2v2H0z" fill="#aaa" />
    </svg>
  );
}

function FormulaBar() {
  return (
    <div className="flex h-[55px] shrink-0 items-center px-[5px] text-[19px]">
      <div className="flex h-[35px] w-[361px] shrink-0 items-center border border-[#c6c6c6]">
        <input aria-label="이름 상자" defaultValue="J26" className="w-full pt-1 pl-1.5 outline-none" />
        <button type="button" aria-label="이름 목록"><Arrow className="w-[22px]" /></button>
      </div>
      <div className="flex w-[37px] shrink-0 justify-center"><Dots /></div>
      <div className="flex h-[35px] w-[137px] shrink-0 items-center border border-[#c6c6c6] px-px">
        <button type="button" aria-label="취소" className="flex flex-1 justify-center">
          <svg width="17" height="16" viewBox="0 0 17 16" stroke="#c3c3c3" strokeWidth="2.500"><path d="M1 1l15 14M15 1L1 15" /></svg>
        </button>
        <button type="button" aria-label="입력" className="flex flex-1 justify-center">
          <svg width="19" height="15" viewBox="0 0 19 15" fill="none" stroke="#c3c3c3" strokeWidth="3.500"><path d="M1 8l6 5L18 1" /></svg>
        </button>
        <button type="button" aria-label="함수 삽입" className="flex-1 text-2xl leading-6 font-bold text-[#666] italic [font-family:'Liberation_Serif',serif]">
          f<span className="text-lg leading-6">x</span>
        </button>
      </div>
      <div className="ml-[3px] flex h-[35px] flex-1 items-center border border-[#c6c6c6]">
        <input aria-label="수식 입력줄" defaultValue="'(주) 티씨씨스틸" className="w-full pl-3 outline-none" />
        <button type="button" aria-label="수식 입력줄 확장" className="pt-1 pr-1">
          <svg width="11" height="8" viewBox="0 0 11 8" fill="none" stroke="#777" strokeWidth="3"><path d="M1 1l4.500 4.500L10 1" /></svg>
        </button>
      </div>
    </div>
  );
}

function ScrollButton({ label, d }: { label: string; d: string }) {
  return (
    <button type="button" aria-label={label} className="flex size-[19px] shrink-0 items-center justify-center border border-[#c0c0c0] bg-white">
      <svg width="9" height="9" viewBox="0 0 9 9"><path d={d} fill="#777" /></svg>
    </button>
  );
}

function SheetTabs() {
  return (
    <div className="flex h-[28px] shrink-0 bg-[#f5f5f5]">
      <div className="flex w-[103px] shrink-0 items-center gap-6 pl-7 pb-0.5">
        <button type="button" aria-label="이전 시트"><svg width="5" height="9" viewBox="0 0 5 9"><path d="M5 0v9L0 4.500z" fill="#bbb" /></svg></button>
        <button type="button" aria-label="다음 시트"><svg width="5" height="9" viewBox="0 0 5 9"><path d="M0 0v9l5-4.500z" fill="#bbb" /></svg></button>
      </div>
      <button type="button" className="relative z-10 -mt-px h-[27px] w-[68px] border-x border-b-2 border-x-[#ababab] border-b-[#217346] bg-white text-[17px] leading-6 text-[#217346]">Table</button>
      <button type="button" aria-label="새 시트" className="ml-[33px]">
        <svg width="20" height="20" viewBox="0 0 20 20" fill="none" stroke="#777"><circle cx="10" cy="10" r="9.300" strokeWidth="1.200" /><path d="M10 5v10M5 10h10" strokeWidth="2" /></svg>
      </button>
      <div className="ml-auto flex items-start pt-1 pr-[25px]">
        <div className="flex h-[19px] w-[17px] items-center"><Dots /></div>
        <ScrollButton label="왼쪽으로 스크롤" d="M6 0v9L1 4.500z" />
        <div className="flex h-[19px] w-[690px] bg-[#e8e8e8]"><div className="w-[272px] border border-[#ababab] bg-white" /></div>
        <ScrollButton label="오른쪽으로 스크롤" d="M3 0v9l5-4.500z" />
      </div>
    </div>
  );
}

function StatusBar() {
  return (
    <footer className="flex h-[27px] shrink-0 items-center justify-end bg-[#217346] text-white">
      <button type="button" aria-label="기본 보기" className="flex h-full w-[41px] items-center justify-center bg-[#0a6332]">
        <svg width="13" height="13" viewBox="0 0 13 13" fill="none" stroke="#fff"><path d="M.5.5h12v12H.5zM4.500 0v13M8.500 0v13M0 4.500h13M0 8.500h13" /></svg>
      </button>
      <button type="button" aria-label="페이지 레이아웃" className="flex w-[41px] justify-center">
        <svg width="14" height="13" viewBox="0 0 14 13" fill="none" stroke="#fff"><path d="M.5.5h13v12H.5zM3.500 2.500h7v8h-7zM5 4.500h4M5 6.500h4M5 8.500h4" /></svg>
      </button>
      <button type="button" aria-label="페이지 나누기 미리 보기" className="flex w-[41px] justify-center">
        <svg width="14" height="13" viewBox="0 0 14 13" fill="none" stroke="#fff"><path d="M.5.5h13v12H.5z" /><path d="M0 0h4v9H0zM5 0h4v6H5z" fill="#fff" stroke="none" /></svg>
      </button>
      <button type="button" aria-label="축소" className="ml-[5px]"><svg width="9" height="11" viewBox="0 0 9 11"><path d="M0 4h9v3H0z" fill="#fff" /></svg></button>
      <input
        type="range"
        aria-label="확대/축소"
        defaultValue={50}
        className="mx-1 h-4 w-[125px] appearance-none bg-[linear-gradient(#fff,#fff)] bg-[length:100%_1px] bg-center bg-no-repeat [&::-webkit-slider-thumb]:h-3.5 [&::-webkit-slider-thumb]:w-[5px] [&::-webkit-slider-thumb]:appearance-none [&::-webkit-slider-thumb]:bg-white"
      />
      <button type="button" aria-label="확대"><svg width="11" height="11" viewBox="0 0 11 11"><path d="M0 4h11v3H0zM4 0h3v11H4z" fill="#fff" /></svg></button>
      <span className="w-[67px] pr-2 text-right">100 %</span>
    </footer>
  );
}

export default function App() {
  return (
    <div className="relative flex h-screen flex-col overflow-hidden bg-black p-1 text-base text-[#444] [font-family:'Open_Sans','Noto_Sans_CJK_KR',sans-serif]">
      <div className="absolute inset-x-0 bottom-0 flex h-[9px] overflow-hidden bg-[#1e1e1e] pl-[629px]">
        <div className="h-full w-[61px] bg-[#484848]" />
        <span className="mt-1.5 mr-[91px] ml-auto text-sm leading-[14px] text-white">오후 3:43</span>
      </div>
      <div className="relative flex min-h-0 flex-1 flex-col border-2 border-[#f00] p-[3px]">
        <div className="flex min-h-0 flex-1 flex-col bg-white">
          <TitleBar />
          <TabRow />
          <Ribbon />
          <FormulaBar />
          <main className="flex min-h-0 flex-1">
            <div className="isolate min-w-0 flex-1 overflow-hidden border-r border-b border-[#ababab]"><Sheet /></div>
            <div className="mt-0.5 mr-[3px] ml-[3px] flex w-[19px] shrink-0 flex-col bg-[#f1f1f1]">
              <ScrollButton label="위로 스크롤" d="M0 6h9L4.500 2z" />
              <div className="h-[21px] border border-[#ababab] bg-white" />
              <div className="flex-1" />
              <ScrollButton label="아래로 스크롤" d="M0 2h9L4.500 7z" />
            </div>
          </main>
          <SheetTabs />
          <StatusBar />
        </div>
      </div>
    </div>
  );
}
